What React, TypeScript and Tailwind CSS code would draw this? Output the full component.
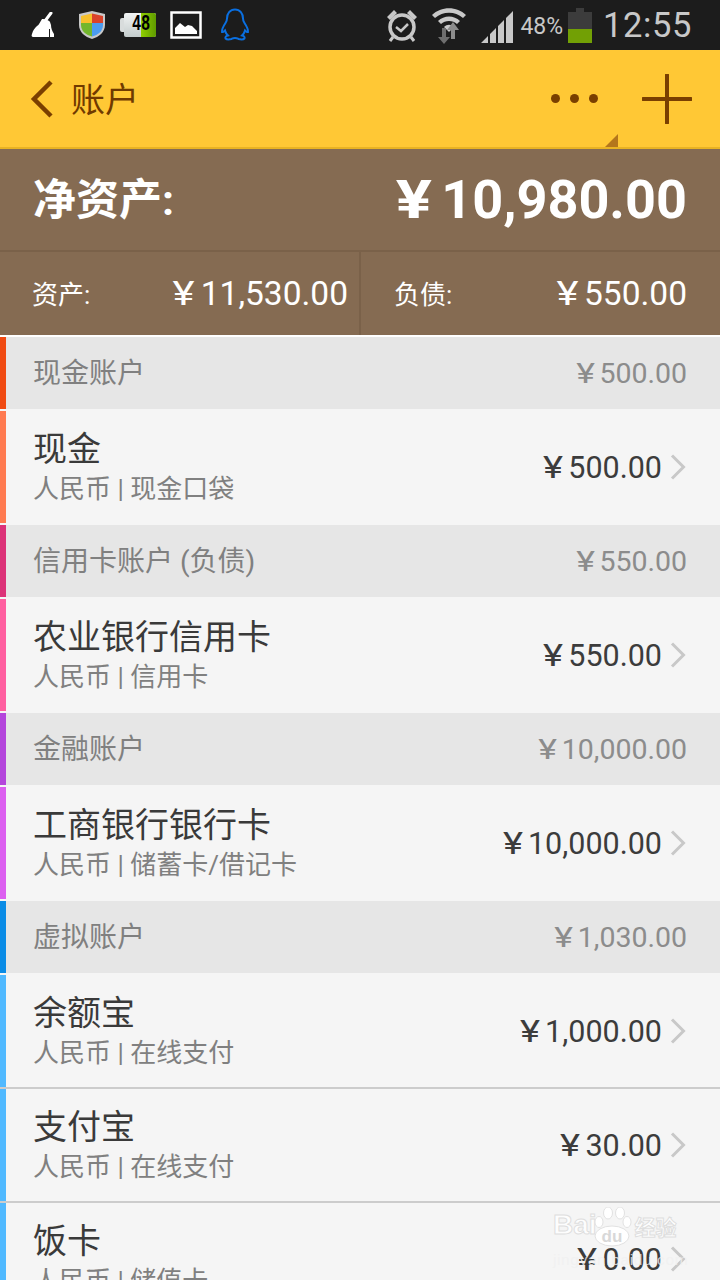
const FONT = "font-['Roboto','Noto_Sans_CJK_SC',sans-serif]";

type Account = { name: string; sub: string; amount: string };
type Group = { title: string; total: string; headColor: string; barColor: string; accounts: Account[] };

const groups: Group[] = [
  {
    title: "现金账户",
    total: "500.00",
    headColor: "bg-[#f04a12]",
    barColor: "bg-[#ff7a50]",
    accounts: [{ name: "现金", sub: "人民币 | 现金口袋", amount: "500.00" }],
  },
  {
    title: "信用卡账户 (负债)",
    total: "550.00",
    headColor: "bg-[#dc3278]",
    barColor: "bg-[#ff5fa0]",
    accounts: [{ name: "农业银行信用卡", sub: "人民币 | 信用卡", amount: "550.00" }],
  },
  {
    title: "金融账户",
    total: "10,000.00",
    headColor: "bg-[#b446dc]",
    barColor: "bg-[#dc5ff0]",
    accounts: [{ name: "工商银行银行卡", sub: "人民币 | 储蓄卡/借记卡", amount: "10,000.00" }],
  },
  {
    title: "虚拟账户",
    total: "1,030.00",
    headColor: "bg-[#0a8ce6]",
    barColor: "bg-[#50b9ff]",
    accounts: [
      { name: "余额宝", sub: "人民币 | 在线支付", amount: "1,000.00" },
      { name: "支付宝", sub: "人民币 | 在线支付", amount: "30.00" },
      { name: "饭卡", sub: "人民币 | 储值卡", amount: "0.00" },
    ],
  },
];

function Money({ value, className }: { value: string; className?: string }) {
  return (
    <span className={`flex items-baseline gap-[0.17em] whitespace-nowrap ${className ?? ""}`}>
      {/* the yen sign is wider than Roboto's in the picture */}
      <span className="inline-block origin-right scale-x-[1.25]">¥</span>
      <span>{value}</span>
    </span>
  );
}

function StatusLeft() {
  return (
    <div className="flex items-center">
      {/* broom */}
      <svg width="24" height="26" viewBox="0 0 24 26" className="ml-[31px]">
        <path d="M14 9l6-8" stroke="#fff" strokeWidth="3" strokeLinecap="round" />
        <path d="M11 7c3 0 7 1 8 3l1 3c0 3 1 6 3 9v3H2c-1 0-2-1-1-3 1-4 3-6 5-8 2-1 3-4 5-7z" fill="#fff" />
        <path d="M18.500 17v8" stroke="#1c1c1c" strokeWidth="1" />
      </svg>
      {/* shield */}
      <svg width="28" height="30" viewBox="0 0 28 30" className="ml-[23px]">
        <path d="M14 1l13 3v11c0 7-6 12-13 14C7 27 1 22 1 15V4z" fill="#c8c8c8" />
        <path d="M14 3.500L3 6v7h11z" fill="#f7c02c" />
        <path d="M14 3.500L25 6v7H14z" fill="#d9432b" />
        <path d="M3 13h11v13.500C8 25 3 21 3 15z" fill="#72b62c" />
        <path d="M25 13H14v13.500c6-1.500 11-5.500 11-11.500z" fill="#4a9cf0" />
      </svg>
      {/* battery widget */}
      <div className="ml-[14px] flex items-center">
        <div className="h-[14px] w-[4px] rounded-l-[2px] bg-[#d8dcdc]" />
        <div className="flex h-[24px] w-[32px] items-center rounded-[2px] bg-gradient-to-b from-[#f2f4f4] to-[#c4cccc]">
          <span className="flex h-full w-[17px] items-center justify-end text-[22px] leading-none font-bold text-black font-['Liberation_Mono',monospace]">
            <span className="inline-block origin-right scale-x-[0.7]">4</span>
          </span>
          <span className="flex h-full flex-1 items-center rounded-r-[2px] bg-gradient-to-r from-[#8fce00] to-[#5f9a00] text-[22px] leading-none font-bold text-black font-['Liberation_Mono',monospace]">
            <span className="inline-block origin-left scale-x-[0.7]">8</span>
          </span>
        </div>
      </div>
      {/* picture */}
      <svg width="32" height="28" viewBox="0 0 32 28" className="ml-[14px]">
        <rect x="1.500" y="1.500" width="29" height="25" fill="none" stroke="#fff" strokeWidth="2.500" />
        <path d="M5 23v-6l5-5 5 4 3-2 4 1 5 5v3z" fill="#fff" />
      </svg>
      {/* qq */}
      <svg width="30" height="34" viewBox="0 0 30 34" className="ml-[18px]">
        <path
          d="M15 1.500c-5 0-8 4-8 9 0 2-.5 3-1.500 4.500C3.500 18 1.500 21 2 24c1 .5 2-.5 3-1.500.5 2 1.500 3.500 3 5-2 .5-3 1.500-2.500 3 1 1 4 1 6 .5 1-.5 1.500-1 3.500-1s2.500.5 3.500 1c2 .5 5 .5 6-.5.5-1.500-.5-2.500-2.500-3 1.500-1.500 2.500-3 3-5 1 1 2 2 3 1.500.5-3-1.500-6-3.500-9C23.500 13.500 23 12.500 23 10.500c0-5-3-9-8-9z"
          fill="none"
          stroke="#0a6fe0"
          strokeWidth="2"
        />
      </svg>
    </div>
  );
}

function StatusRight() {
  return (
    <div className="flex items-center">
      {/* alarm */}
      <svg width="34" height="36" viewBox="0 0 34 36" className="mr-[12px]">
        <circle cx="17" cy="20" r="12" fill="none" stroke="#c8c8c8" strokeWidth="3.500" />
        <path d="M11 20l5 4 7-7" fill="none" stroke="#c8c8c8" strokeWidth="2.500" />
        <path d="M2 10l7-7 3 3-7 7zM32 10l-7-7-3 3 7 7z" fill="#c8c8c8" />
        <path d="M8 30l-3 4M26 30l3 4" stroke="#c8c8c8" strokeWidth="3" />
      </svg>
      {/* wifi */}
      <svg width="36" height="38" viewBox="0 0 36 38" className="mr-[13px]">
        <path d="M1 9C10 0 26 0 35 9l-3 3C24 5 12 5 4 12z" fill="#c8c8c8" />
        <path d="M7 15c6-6 16-6 22 0l-3 3c-4-4-12-4-16 0z" fill="#c8c8c8" />
        <path d="M13 21c3-3 7-3 10 0l-5 5z" fill="#c8c8c8" />
        <path d="M11 22h4v9h4l-6 7-6-7h4z" fill="#6e6e6e" />
        <path d="M22 16l6 8h-4v9h-4v-9h-4z" fill="#8c8c8c" />
      </svg>
      {/* signal */}
      <svg width="34" height="34" viewBox="0 0 34 34" className="mt-[4px] mr-[6px]">
        <path d="M1 33l7-7v7zM10 33V24l6-6v15zM18 33V16l6-6v23zM26 33V8l7-7v32z" fill="#c8c8c8" />
      </svg>
      <span className="mt-[2px] mr-[5px] text-[23px] leading-none text-[#c8c8c8]">48%</span>
      {/* battery */}
      <div className="mr-[11px] flex w-[24px] flex-col items-center">
        <div className="h-[4px] w-[8px] bg-[#3c3c3c]" />
        <div className="h-[17px] w-[24px] bg-[#3c3c3c]" />
        <div className="h-[14px] w-[24px] bg-[#72a005]" />
      </div>
      <span className="mr-[28px] text-[34.500px] leading-none tracking-[0.6px] text-[#c8c8c8]">12:55</span>
    </div>
  );
}

function Watermark() {
  return (
    <div className="pointer-events-none absolute top-[1203px] left-[553px] flex flex-col font-['Liberation_Sans','Noto_Sans_CJK_SC',sans-serif]">
      <div className="flex items-end whitespace-nowrap">
        <span className="text-[28px] leading-[44px] font-bold text-white/80 [-webkit-text-stroke:1px_#dedede]">Bai</span>
        <svg width="40" height="40" viewBox="0 0 40 40" className="-ml-[4px] shrink-0">
          <ellipse cx="6" cy="15" rx="4" ry="5.500" fill="#fff" stroke="#e2e2e2" />
          <ellipse cx="15" cy="6" rx="4.500" ry="6" fill="#fff" stroke="#e2e2e2" />
          <ellipse cx="27" cy="6" rx="4.500" ry="6" fill="#fff" stroke="#e2e2e2" />
          <ellipse cx="34" cy="15" rx="4" ry="5.500" fill="#fff" stroke="#e2e2e2" />
          <ellipse cx="19" cy="29" rx="17" ry="10" fill="#fff" stroke="#e2e2e2" />
          <text x="19" y="35" textAnchor="middle" fontSize="17" fontWeight="700" fill="#d8d8d8">du</text>
        </svg>
        <span className="ml-[2px] text-[21px] leading-[38px] font-bold text-white/80 [-webkit-text-stroke:1px_#dedede]">经验</span>
      </div>
      <span className="mt-[5px] text-[15.500px] leading-none tracking-[0.6px] whitespace-nowrap text-[#f0f0f0]/80">jingyan.baidu.com</span>
    </div>
  );
}

function AccountRow({ account, color, first, last }: { account: Account; color: string; first: boolean; last: boolean }) {
  return (
    <div className={`bg-[#f5f5f5] ${first ? "pt-[2px]" : "border-t-2 border-[#cccccc]"} ${last ? "pb-[2px]" : ""}`}>
      <div className="flex h-[112px]">
        <div className={`w-[6px] ${color}`} />
        <div className="flex flex-1 items-center justify-between pr-[34px] pl-[27px]">
          <div className="flex flex-col pt-[2px]">
            <span className="text-[34px] leading-[40px] text-[#3a3a3a]">{account.name}</span>
            <span className="mt-[2px] text-[26px] leading-[36px] text-[#808080]">{account.sub}</span>
          </div>
          <div className="flex items-center gap-[8px] pt-[2px]">
            <Money value={account.amount} className="text-[30.500px] text-[#3c3c3c]" />
            <svg width="16" height="26" viewBox="0 0 16 26" className="-mt-[2px]">
              <path d="M2 1.500L13.500 13 2 24.500" fill="none" stroke="#c8c8c8" strokeWidth="3" />
            </svg>
          </div>
        </div>
      </div>
    </div>
  );
}

export default function App() {
  return (
    <div className={`relative h-[1280px] w-[720px] overflow-hidden bg-white ${FONT}`}>
      {/* status bar */}
      <div className="flex h-[50px] items-center justify-between bg-[#1c1c1c]">
        <StatusLeft />
        <StatusRight />
      </div>

      {/* action bar */}
      <div className="relative flex h-[99px] items-center justify-between border-b-2 border-[#e9b323] bg-[#ffc835] pr-[28px] pl-[30px]">
        <div className="flex items-center">
          <svg width="24" height="38" viewBox="0 0 24 38">
            <path d="M21 2L4 19l17 17" fill="none" stroke="#7a3f00" strokeWidth="4.500" />
          </svg>
          <span className="ml-[17px] pt-[2px] text-[34px] leading-none text-[#703a00]">账户</span>
        </div>
        <div className="flex items-center">
          <div className="flex gap-[10px]">
            <span className="h-[9px] w-[9px] rounded-full bg-[#7a3f00]" />
            <span className="h-[9px] w-[9px] rounded-full bg-[#7a3f00]" />
            <span className="h-[9px] w-[9px] rounded-full bg-[#7a3f00]" />
          </div>
          <svg width="50" height="50" viewBox="0 0 50 50" className="ml-[44px]">
            <path d="M25 1v48M1 25h48" stroke="#7a3f00" strokeWidth="4" strokeLinecap="round" />
          </svg>
        </div>
        <div className="absolute right-[102px] bottom-0 h-[13px] w-[13px] bg-[#b4761c] [clip-path:polygon(100%_0,100%_100%,0_100%)]" />
      </div>

      {/* net worth */}
      <div className="flex h-[101px] items-center justify-between bg-[#856b52] pr-[33px] pl-[33px] text-white">
        <span className="mt-[2px] text-[43px] leading-none font-bold">净资产:</span>
        <Money value="10,980.00" className="text-[54px] leading-none font-bold" />
      </div>
      <div className="flex h-[85px] border-t-2 border-[#7a6149] bg-[#856b52] text-white">
        <div className="flex w-[361px] items-center justify-between border-r-2 border-[#7a6149] pr-[11px] pl-[32px]">
          <span className="pt-[3px] text-[26px] leading-none">资产:</span>
          <Money value="11,530.00" className="text-[33.500px] leading-none" />
        </div>
        <div className="flex flex-1 items-center justify-between pr-[33px] pl-[33px]">
          <span className="pt-[3px] text-[26px] leading-none">负债:</span>
          <Money value="550.00" className="text-[33.500px] leading-none" />
        </div>
      </div>

      {/* account groups */}
      <div className="mt-[2px] flex flex-col">
        {groups.map((g) => (
          <div key={g.title} className="flex flex-col">
            <div className="flex h-[72px] bg-[#e6e6e6]">
              <div className={`w-[6px] ${g.headColor}`} />
              <div className="flex flex-1 items-center justify-between pt-[2px] pr-[33px] pl-[27px]">
                <span className="text-[28px] leading-none text-[#808080]">{g.title}</span>
                <Money value={g.total} className="text-[28.500px] leading-none text-[#8c8c8c]" />
              </div>
            </div>
            {g.accounts.map((a, i) => (
              <AccountRow
                key={a.name}
                account={a}
                color={g.barColor}
                first={i === 0}
                last={i === g.accounts.length - 1}
              />
            ))}
          </div>
        ))}
      </div>

      <Watermark />
    </div>
  );
}
